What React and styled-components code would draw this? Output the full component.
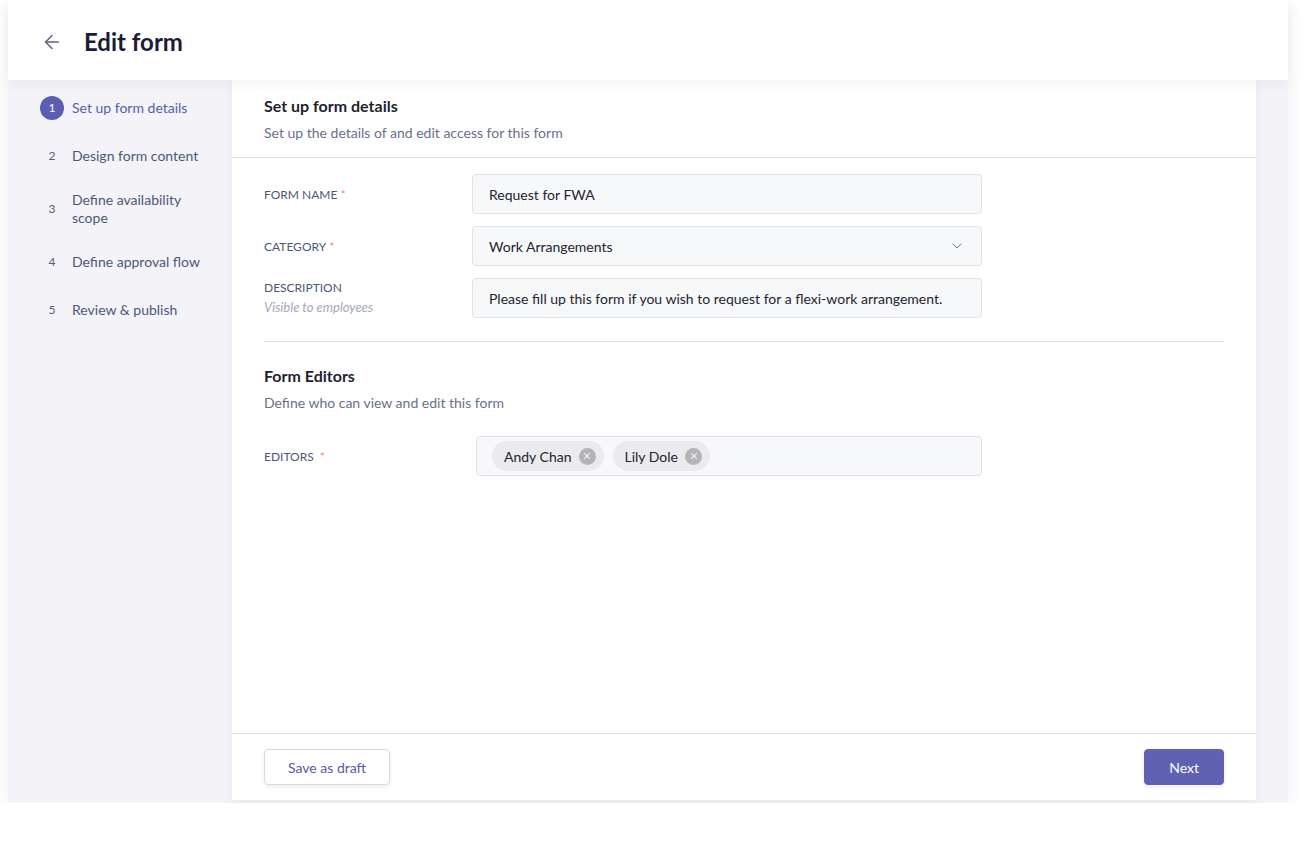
import styled, { createGlobalStyle } from "styled-components";
import { ArrowLeft, ChevronDown, X } from "lucide-react";

const GlobalStyle = createGlobalStyle`
  body {
    margin: 0;
    background: #ffffff;
    font-family: "Lato", "Noto Sans", sans-serif;
    color: #1f1f2e;
  }
  * { box-sizing: border-box; }
`;

const Frame = styled.div`
  width: 1280px;
  height: 803px;
  margin-left: 8px;
  background: #f3f3f8;
  box-shadow: 0 6px 18px rgba(40, 40, 80, 0.06);
  display: flex;
  flex-direction: column;
`;

const Header = styled.header`
  height: 80px;
  flex-shrink: 0;
  background: #ffffff;
  display: flex;
  align-items: center;
  padding: 3px 0 0 33px;
  gap: 21px;
  box-shadow: 0 4px 12px rgba(40, 40, 80, 0.05);
  position: relative;
  z-index: 2;
`;

const BackButton = styled.button`
  border: none;
  background: none;
  padding: 0;
  display: flex;
  color: #5b6480;
  cursor: pointer;
`;

const Title = styled.h1`
  margin: 0;
  font-size: 24px;
  font-weight: 700;
  color: #1b1b38;
`;

const Body = styled.div`
  flex: 1;
  display: flex;
  min-height: 0;
`;

const Sidebar = styled.nav`
  width: 224px;
  flex-shrink: 0;
  padding: 4px 0 0 32px;
`;

const Steps = styled.ol`
  list-style: none;
  margin: 0;
  padding: 0;
`;

const Step = styled.li`
  display: flex;
  align-items: center;
  gap: 8px;
  min-height: 48px;
  padding: 11px 0;
  font-size: 14px;
  line-height: 18px;
  color: ${(p) => (p.$active ? "#5b5bb0" : "#4d5878")};
`;

const StepNumber = styled.span`
  width: 24px;
  height: 24px;
  flex-shrink: 0;
  border-radius: 50%;
  display: flex;
  align-items: center;
  justify-content: center;
  font-size: 12px;
  background: ${(p) => (p.$active ? "#5c5cb2" : "transparent")};
  color: ${(p) => (p.$active ? "#ffffff" : "#5a6078")};
`;

const StepLabel = styled.span`
  max-width: 130px;
`;

const Card = styled.main`
  width: 1024px;
  height: 720px;
  background: #ffffff;
  display: flex;
  flex-direction: column;
  box-shadow: 0 4px 10px rgba(40, 40, 80, 0.06);
`;

const CardHead = styled.div`
  padding: 16px 32px 14px;
  border-bottom: 1px solid #dedfe5;
`;

const SectionTitle = styled.h2`
  margin: 0;
  font-size: 16px;
  line-height: 20px;
  font-weight: 700;
  color: #1f1f2e;
`;

const SectionText = styled.p`
  margin: 7px 0 0;
  font-size: 14px;
  line-height: 20px;
  color: #68708a;
`;

const Content = styled.div`
  flex: 1;
  padding: 16px 32px 0;
`;

const Fields = styled.div`
  display: flex;
  flex-direction: column;
  gap: 12px;
`;

const Row = styled.div`
  display: grid;
  grid-template-columns: 208px 510px;
  align-items: ${(p) => (p.$top ? "start" : "center")};
`;

const Label = styled.div`
  font-size: 12px;
  line-height: 16px;
  text-transform: uppercase;
  color: #4d5878;
  padding-top: ${(p) => (p.$top ? "2px" : "1px")};
`;

const Required = styled.span`
  color: #f0895c;
  margin-left: 3px;
`;

const Hint = styled.div`
  font-size: 13px;
  line-height: 18px;
  font-style: italic;
  text-transform: none;
  color: #a4a8b8;
  margin-top: 2px;
`;

const Field = styled.div`
  height: 40px;
  display: flex;
  align-items: center;
  justify-content: space-between;
  padding: 0 16px;
  background: #f7f8fa;
  border: 1px solid #e1e3e8;
  border-radius: 4px;
  font-size: 14px;
  color: #24242f;
  margin-left: ${(p) => p.$offset || 0}px;
`;

const TagField = styled(Field)`
  justify-content: flex-start;
  gap: 9px;
  padding-left: 15px;
`;

const Chip = styled.span`
  display: inline-flex;
  align-items: center;
  gap: 7px;
  height: 30px;
  padding: 0 8px 0 12px;
  border-radius: 15px;
  background: #ebebed;
  font-size: 14px;
  color: #24242f;
`;

const ChipClose = styled.span`
  width: 17px;
  height: 17px;
  border-radius: 50%;
  background: #b3b3b9;
  color: #ffffff;
  display: flex;
  align-items: center;
  justify-content: center;
`;

const Divider = styled.hr`
  border: none;
  border-top: 1px solid #dedfe5;
  margin: 23px 0 24px;
`;

const SubSection = styled.div`
  margin-bottom: 23px;
`;

const Footer = styled.footer`
  height: 67px;
  border-top: 1px solid #dedfe5;
  display: flex;
  justify-content: space-between;
  align-items: flex-start;
  padding: 15px 32px 0;
`;

const Button = styled.button`
  font-family: "Lato", sans-serif;
  font-size: 14px;
  height: 36px;
  padding: 0 ${(p) => (p.$primary ? "24px" : "23px")};
  border-radius: 4px;
  cursor: pointer;
  border: 1px solid ${(p) => (p.$primary ? "#6061b3" : "#d9dae2")};
  background: ${(p) => (p.$primary ? "#6061b3" : "#ffffff")};
  color: ${(p) => (p.$primary ? "#ffffff" : "#5a5aa6")};
  box-shadow: 0 2px 4px rgba(40, 40, 80, 0.08);
`;

const steps = [
  "Set up form details",
  "Design form content",
  "Define availability scope",
  "Define approval flow",
  "Review & publish",
];

const editors = ["Andy Chan", "Lily Dole"];

export default function App() {
  return (
    <>
      <GlobalStyle />
      <Frame>
        <Header>
          <BackButton aria-label="Back">
            <ArrowLeft size={22} strokeWidth={1.6} />
          </BackButton>
          <Title>Edit form</Title>
        </Header>
        <Body>
          <Sidebar>
            <Steps>
              {steps.map((s, i) => (
                <Step key={s} $active={i === 0}>
                  <StepNumber $active={i === 0}>{i + 1}</StepNumber>
                  <StepLabel>{s}</StepLabel>
                </Step>
              ))}
            </Steps>
          </Sidebar>
          <Card>
            <CardHead>
              <SectionTitle>Set up form details</SectionTitle>
              <SectionText>Set up the details of and edit access for this form</SectionText>
            </CardHead>
            <Content>
              <Fields>
                <Row>
                  <Label>
                    Form name<Required>*</Required>
                  </Label>
                  <Field>Request for FWA</Field>
                </Row>
                <Row>
                  <Label>
                    Category<Required>*</Required>
                  </Label>
                  <Field>
                    Work Arrangements
                    <ChevronDown size={16} strokeWidth={1.5} color="#6e778e" />
                  </Field>
                </Row>
                <Row $top>
                  <Label $top>
                    Description
                    <Hint>Visible to employees</Hint>
                  </Label>
                  <Field>
                    Please fill up this form if you wish to request for a flexi-work arrangement.
                  </Field>
                </Row>
              </Fields>
              <Divider />
              <SubSection>
                <SectionTitle>Form Editors</SectionTitle>
                <SectionText>Define who can view and edit this form</SectionText>
              </SubSection>
              <Row>
                <Label>
                  Editors <Required>*</Required>
                </Label>
                <TagField $offset={4}>
                  {editors.map((e) => (
                    <Chip key={e}>
                      {e}
                      <ChipClose>
                        <X size={10} strokeWidth={2.5} />
                      </ChipClose>
                    </Chip>
                  ))}
                </TagField>
              </Row>
            </Content>
            <Footer>
              <Button>Save as draft</Button>
              <Button $primary>Next</Button>
            </Footer>
          </Card>
        </Body>
      </Frame>
    </>
  );
}
